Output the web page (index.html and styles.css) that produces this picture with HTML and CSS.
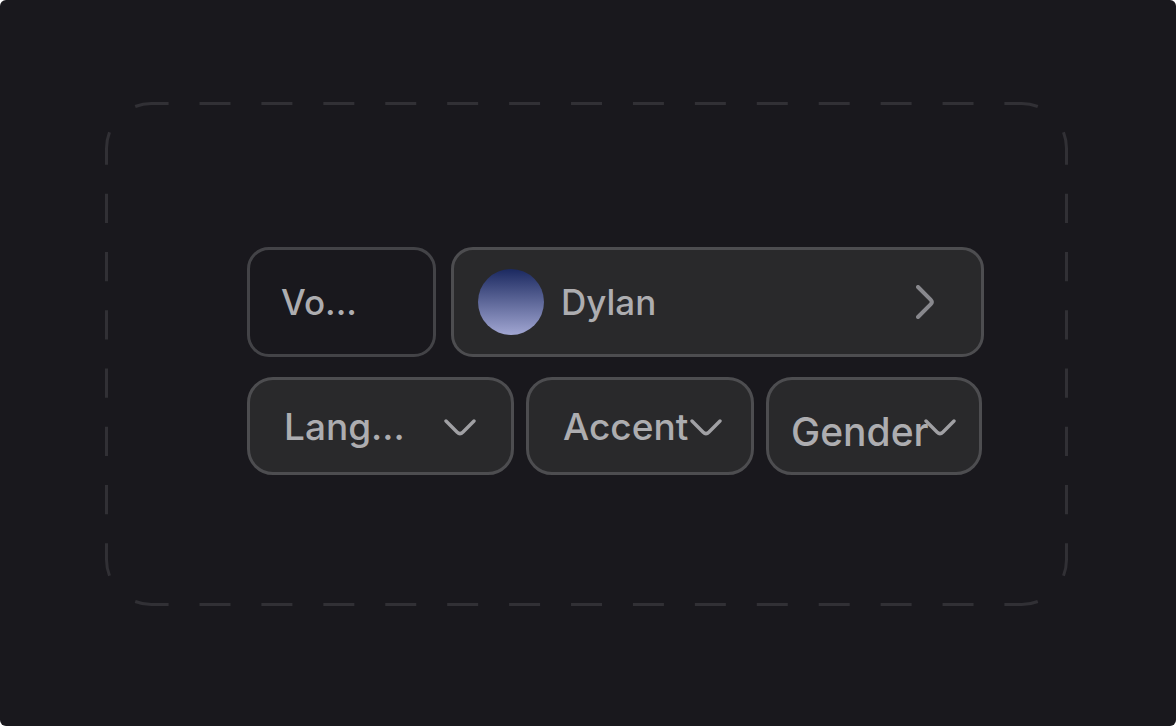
FILE: index.html
```
<!DOCTYPE html>
<html lang="en">
<head>
    <meta charset="UTF-8">
    <meta name="viewport" content="width=device-width, initial-scale=1.0">
    <title>Voice Settings</title>
    <link rel="stylesheet" href="styles.css">
</head>
<body>
    <main class="frame">
        <!-- Dashed outline -->
        <svg class="outline" viewBox="0 0 963 504" preserveAspectRatio="none" aria-hidden="true">
            <defs>
                <path id="corner" d="M30.2 4.5A45 45 0 0 1 46.5 1.5H63.6M4.5 30.2A45 45 0 0 0 1.5 46.5V62.7"/>
            </defs>
            <use href="#corner"/>
            <use href="#corner" transform="translate(963 0) scale(-1 1)"/>
            <use href="#corner" transform="translate(0 504) scale(1 -1)"/>
            <use href="#corner" transform="translate(963 504) scale(-1 -1)"/>
            <path d="M94.5 1.5H869M94.5 502.5H869" stroke-dasharray="31 30.92"/>
            <path d="M1.5 91.8V413M961.5 91.8V413" stroke-dasharray="29.1 29.15"/>
        </svg>

        <!-- Voice -->
        <div class="row voice-row">
            <label class="box voice-label" for="voice">Vo...</label>
            <button class="box voice-button" id="voice" type="button">
                <span class="avatar"></span>
                <span class="voice-name">Dylan</span>
                <svg class="arrow" viewBox="0 0 18 34" aria-hidden="true">
                    <path d="M2 2L14.6 14.6Q17 17 14.6 19.4L2 32"/>
                </svg>
            </button>
        </div>

        <!-- Filters -->
        <div class="row filter-row">
            <div class="filter language">
                <select class="box" aria-label="Language">
                    <option>Lang...</option>
                </select>
                <svg class="chevron" viewBox="0 0 32 18" aria-hidden="true">
                    <path stroke-width="3.4" d="M2 2L13.2 13.2Q16 16 18.8 13.2L30 2"/>
                </svg>
            </div>
            <div class="filter accent">
                <select class="box" aria-label="Accent">
                    <option>Accent</option>
                </select>
                <svg class="chevron" viewBox="0 0 32 18" aria-hidden="true">
                    <path stroke-width="3.4" d="M2 2L13.2 13.2Q16 16 18.8 13.2L30 2"/>
                </svg>
            </div>
            <div class="filter gender">
                <select class="box" aria-label="Gender">
                    <option>Gender</option>
                </select>
                <svg class="chevron" viewBox="0 0 32 18" aria-hidden="true">
                    <path stroke-width="3.4" d="M2 2L13.2 13.2Q16 16 18.8 13.2L30 2"/>
                </svg>
            </div>
        </div>
    </main>
</body>
</html>
```
FILE: styles.css
```
* {
    box-sizing: border-box;
}
html {
    background-color: #fff;
}
body {
    margin: 0;
    min-height: 100vh;
    padding: 102px 108px 120px 105px;
    background-color: #19181d;
    border-radius: 6px;
    font-family: Inter, sans-serif;
    font-weight: 500;
    color: #adadb0;
}
.frame {
    position: relative;
    padding: 145px 84px 131px 142px;
}
.outline {
    position: absolute;
    inset: 0;
    width: 100%;
    height: 100%;
    fill: none;
    stroke: #313035;
    stroke-width: 3;
}
.row {
    position: relative;
    display: flex;
}
.voice-row {
    gap: 15px;
    margin-bottom: 20px;
}
.filter-row {
    gap: 12px;
    margin-right: 2px;
}
.box {
    border: 3px solid #4d4d50;
    border-radius: 26px;
    background-color: #29292b;
    color: inherit;
    font: inherit;
    font-size: 35px;
    line-height: 48px;
}
.voice-label,
.voice-button {
    display: flex;
    align-items: center;
    height: 110px;
    border-radius: 22px;
}
.voice-label {
    flex: 1 1 189px;
    padding: 0 31px;
    background-color: transparent;
    border-color: #434347;
}
.voice-button {
    flex: 3 1 533px;
    gap: 17px;
    padding: 0 47px 0 24px;
    cursor: pointer;
}
.avatar {
    width: 66px;
    height: 66px;
    border-radius: 50%;
    background: linear-gradient(#1b2960, #a1a6d2);
}
.arrow {
    width: 18px;
    height: 34px;
    margin-left: auto;
    fill: none;
    stroke: #88888d;
    stroke-width: 4;
    stroke-linecap: round;
}
.filter {
    position: relative;
}
.filter select {
    appearance: none;
    width: 100%;
    height: 98px;
    padding: 2px 0 0 34px;
    font-size: 37px;
    cursor: pointer;
}
.language {
    flex: 267 1 0;
}
.accent {
    flex: 228 1 0;
}
.gender {
    flex: 216 1 0;
}
.gender select {
    padding: 12px 0 0 22px;
    font-size: 39px;
}
.chevron {
    position: absolute;
    top: 42px;
    right: 38px;
    width: 32px;
    height: 18px;
    fill: none;
    stroke: #a0a0a4;
    stroke-linecap: round;
    pointer-events: none;
}
.accent .chevron {
    right: 32px;
}
.gender .chevron {
    right: 26px;
}
```
